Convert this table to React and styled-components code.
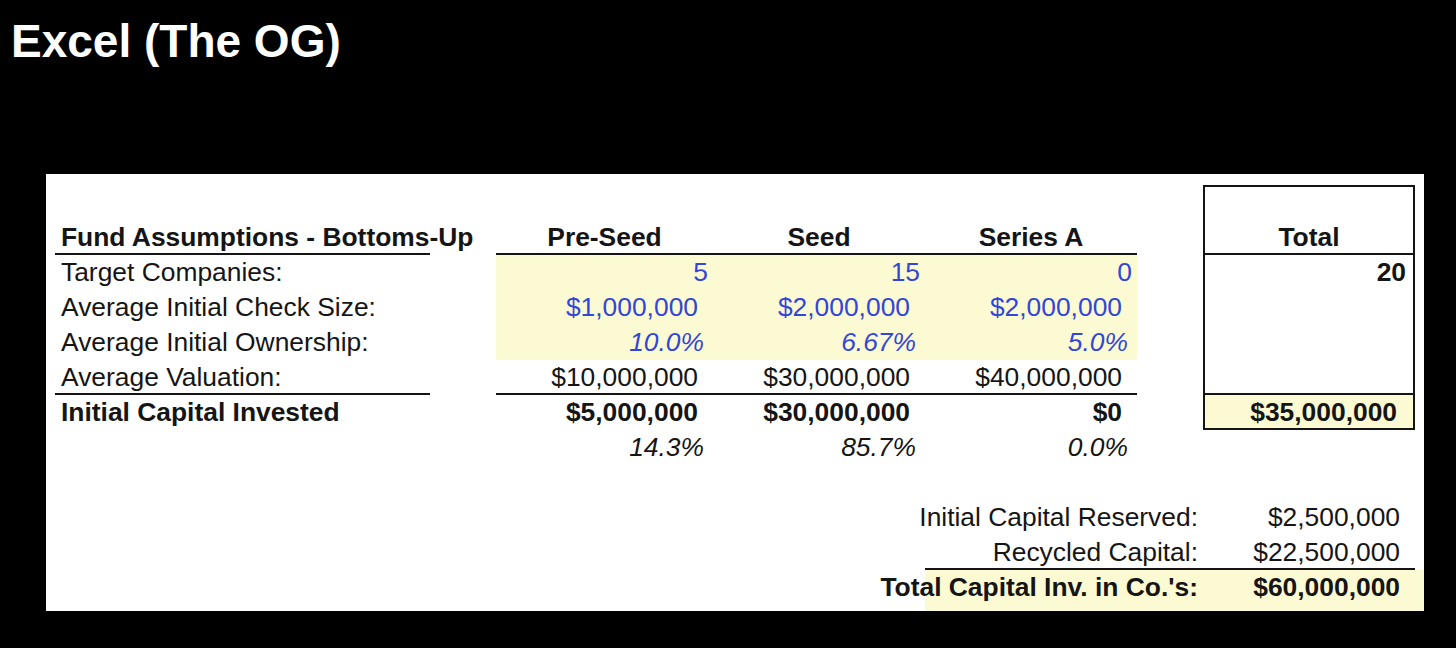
import React from 'react';
import styled, { createGlobalStyle } from 'styled-components';

const INK = '#151515';
const BLUE = '#3346d6';
const YELLOW = '#fcfad2';
const COLS = '375px 66px 217px 212px 212px 66px 212px 9px';
const BOTTOM_COLS = '870px 278px 212px 9px';
const PAD = { int: 5, cur: 15, pct: 9 };

const GlobalStyle = createGlobalStyle`
  html, body { margin: 0; padding: 0; background: #000; }
  body { font-family: "Liberation Sans", Arial, sans-serif; }
`;

const Page = styled.div`
  width: 1456px;
  height: 648px;
  background: #000;
  overflow: hidden;
  display: flex;
  flex-direction: column;
  align-items: flex-start;
`;

const Title = styled.h1`
  margin: 18px 0 0 11px;
  font: 700 46px/46px "Liberation Sans", Arial, sans-serif;
  color: #fff;
  white-space: nowrap;
`;

const Sheet = styled.section`
  margin: 110px 0 0 46px;
  width: 1378px;
  height: 437px;
  box-sizing: border-box;
  padding: 11px 0 0 9px;
  background: #fff;
  color: ${INK};
  font: 400 26.4px/35px "Liberation Sans", Arial, sans-serif;
  display: flex;
  flex-direction: column;
`;

const Row = styled.div`
  display: grid;
  grid-template-columns: ${COLS};
  height: 35px;
`;

const BaseCell = styled.div`
  box-sizing: border-box;
  height: 35px;
  display: flex;
  align-items: center;
  white-space: nowrap;
  min-width: 0;
`;

const Spacer = styled(BaseCell)``;

const Label = styled(BaseCell)`
  padding-left: 6px;
  padding-top: ${p => (p.$under ? 2 : 0)}px;
  font-weight: ${p => (p.$bold ? 700 : 400)};
  border-bottom: ${p => (p.$under ? `2px solid ${INK}` : 'none')};
`;

const StageHead = styled(BaseCell)`
  justify-content: center;
  padding-top: 2px;
  font-weight: 700;
  border-bottom: 2px solid ${INK};
`;

const Value = styled(BaseCell)`
  justify-content: flex-end;
  padding-right: ${p => PAD[p.$kind]}px;
  padding-top: ${p => (p.$under ? 2 : 0)}px;
  font-weight: ${p => (p.$bold ? 700 : 400)};
  font-style: ${p => (p.$kind === 'pct' ? 'italic' : 'normal')};
  color: ${p => (p.$input ? BLUE : INK)};
  background: ${p => (p.$input ? YELLOW : 'transparent')};
  border-bottom: ${p => (p.$under ? `2px solid ${INK}` : 'none')};
`;

const TotalCell = styled(BaseCell)`
  border-left: 2px solid ${INK};
  border-right: 2px solid ${INK};
  border-top: ${p => (p.$top ? `2px solid ${INK}` : 'none')};
  border-bottom: ${p => (p.$bottom ? `2px solid ${INK}` : 'none')};
  padding-top: ${p => (p.$bottom ? 2 : 0)}px;
  background: ${p => (p.$fill ? YELLOW : 'transparent')};
  justify-content: ${p => (p.$center ? 'center' : 'flex-end')};
  padding-right: ${p => (p.$center ? 0 : p.$pr)}px;
  font-weight: 700;
`;

const Summary = styled.div`
  margin-top: 35px;
  display: flex;
  flex-direction: column;
`;

const SummaryRow = styled.div`
  display: grid;
  grid-template-columns: ${BOTTOM_COLS};
  height: ${p => (p.$grand ? 41 : 35)}px;
`;

const SummaryCell = styled.div`
  box-sizing: border-box;
  height: ${p => (p.$grand ? 41 : 35)}px;
  padding-bottom: ${p => (p.$grand ? 6 : 0)}px;
  padding-top: ${p => (p.$under ? 2 : 0)}px;
  display: flex;
  align-items: center;
  justify-content: flex-end;
  white-space: nowrap;
  font-weight: ${p => (p.$grand ? 700 : 400)};
  background: ${p => (p.$grand ? YELLOW : 'transparent')};
  border-bottom: ${p => (p.$under ? `2px solid ${INK}` : 'none')};
`;

const SummaryLabel = styled(SummaryCell)`
  padding-right: 5px;
`;

const SummaryValue = styled(SummaryCell)`
  padding-right: 15px;
`;

const stages = ['Pre-Seed', 'Seed', 'Series A'];

const rows = [
  { label: 'Target Companies:', values: ['5', '15', '0'], kind: 'int', input: true, total: { text: '20', pr: 7 } },
  { label: 'Average Initial Check Size:', values: ['$1,000,000', '$2,000,000', '$2,000,000'], kind: 'cur', input: true },
  { label: 'Average Initial Ownership:', values: ['10.0%', '6.67%', '5.0%'], kind: 'pct', input: true },
  { label: 'Average Valuation:', values: ['$10,000,000', '$30,000,000', '$40,000,000'], kind: 'cur', under: true, totalBottom: true },
  { label: 'Initial Capital Invested', values: ['$5,000,000', '$30,000,000', '$0'], kind: 'cur', bold: true, total: { text: '$35,000,000', pr: 16 }, totalBottom: true, totalFill: true },
];

const shares = ['14.3%', '85.7%', '0.0%'];

const summary = [
  { label: 'Initial Capital Reserved:', value: '$2,500,000' },
  { label: 'Recycled Capital:', value: '$22,500,000', under: true },
  { label: "Total Capital Inv. in Co.'s:", value: '$60,000,000', grand: true },
];

export default function App() {
  return (
    <>
      <GlobalStyle />
      <Page>
        <Title>Excel (The OG)</Title>
        <Sheet>
          <Row>
            <Spacer /><Spacer /><Spacer /><Spacer /><Spacer /><Spacer />
            <TotalCell $top />
            <Spacer />
          </Row>
          <Row>
            <Label $bold $under>Fund Assumptions - Bottoms-Up</Label>
            <Spacer />
            {stages.map(s => <StageHead key={s}>{s}</StageHead>)}
            <Spacer />
            <TotalCell $bottom $center>Total</TotalCell>
            <Spacer />
          </Row>
          {rows.map(r => (
            <Row key={r.label}>
              <Label $bold={r.bold} $under={r.under}>{r.label}</Label>
              <Spacer />
              {r.values.map((v, i) => (
                <Value key={i} $kind={r.kind} $input={r.input} $bold={r.bold} $under={r.under}>{v}</Value>
              ))}
              <Spacer />
              <TotalCell $bottom={r.totalBottom} $fill={r.totalFill} $pr={r.total ? r.total.pr : 0}>
                {r.total ? r.total.text : ''}
              </TotalCell>
              <Spacer />
            </Row>
          ))}
          <Row>
            <Spacer /><Spacer />
            {shares.map(s => <Value key={s} $kind="pct">{s}</Value>)}
            <Spacer /><Spacer /><Spacer />
          </Row>
          <Summary>
            {summary.map(s => (
              <SummaryRow key={s.label} $grand={s.grand}>
                <Spacer />
                <SummaryLabel $grand={s.grand} $under={s.under}>{s.label}</SummaryLabel>
                <SummaryValue $grand={s.grand} $under={s.under}>{s.value}</SummaryValue>
                <SummaryCell $grand={s.grand} />
              </SummaryRow>
            ))}
          </Summary>
        </Sheet>
      </Page>
    </>
  );
}
